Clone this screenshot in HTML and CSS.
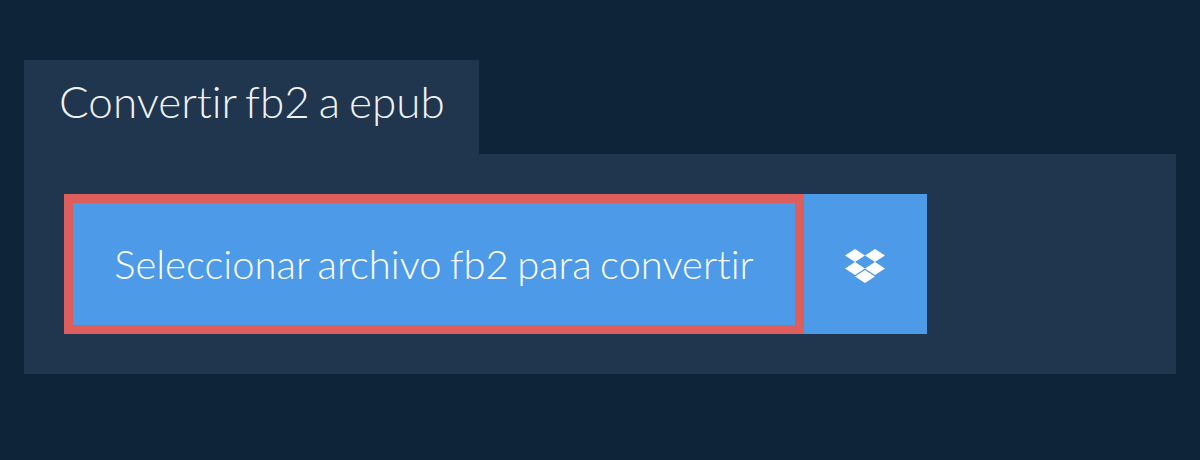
FILE: index.html
```html
<!DOCTYPE html>
<html lang="es">
<head>
  <meta charset="UTF-8">
  <title>Convertir fb2 a epub</title>
  <link rel="stylesheet" href="styles.css">
</head>
<body>
  <div class="converter">
    <h1 class="tab">Convertir fb2 a epub</h1>
    <div class="panel">
      <button class="button select">Seleccionar archivo fb2 para convertir</button>
      <button class="button dropbox" aria-label="Dropbox">
        <svg width="40" height="34" viewBox="0 0 40 34">
          <path fill="#fff" d="M10 0 0 6.500 10 13l10-6.500zM30 0 20 6.500 30 13l10-6.500zM10 13 0 19.500 10 26l10-6.500zM30 13l-10 6.500L30 26l10-6.500zM20 21l-10 6.500L20 34l10-6.500z"/>
        </svg>
      </button>
    </div>
  </div>
</body>
</html>
```

FILE: styles.css
```css
body {
  margin: 0;
  height: 460px;
  overflow: hidden;
  background-color: #0e2539;
  font-family: Lato, sans-serif;
  font-variant-ligatures: none;
}
.converter {
  padding: 60px 24px 0;
}
.tab {
  box-sizing: border-box;
  width: 455px;
  margin: 0;
  padding: 0 35px;
  height: 94px;
  line-height: 82px;
  font-size: 44px;
  font-weight: 300;
  word-spacing: -3px;
  white-space: nowrap;
  color: #f0f2f5;
  background: #20364f;
}
.panel {
  display: flex;
  padding: 40px;
  background: #20364f;
}
.button {
  height: 140px;
  border: none;
  padding: 0;
  color: #fff;
  background: #4d9ae8;
  font-family: inherit;
  font-variant-ligatures: none;
  cursor: pointer;
}
.select {
  box-sizing: border-box;
  width: 740px;
  border: 9px solid #de5d5d;
  font-size: 40px;
  font-weight: 300;
  word-spacing: -2.500px;
}
.dropbox {
  display: flex;
  justify-content: center;
  align-items: center;
  width: 123px;
  padding: 4px 1px 0 0;
}
```
